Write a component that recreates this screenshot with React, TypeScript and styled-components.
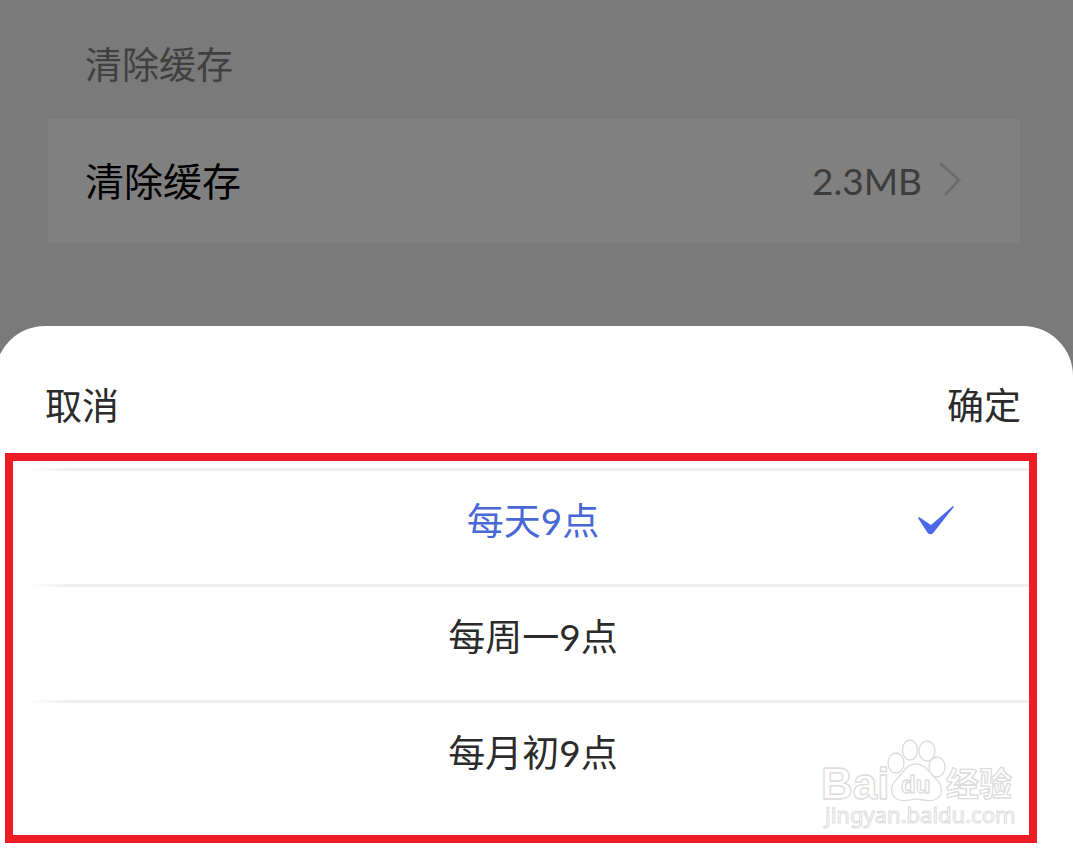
import React, { useState } from "react";
import styled, { createGlobalStyle } from "styled-components";

const GlobalStyle = createGlobalStyle`
  *, *::before, *::after { box-sizing: border-box; }
  html, body { margin: 0; }
  body {
    background: #7a7a7a;
    color: #2b2b2b;
    font-family: Lato, "Noto Sans CJK SC", sans-serif;
    overflow-x: hidden;
  }
  button {
    border: 0;
    padding: 0;
    background: none;
    color: inherit;
    font: inherit;
    cursor: pointer;
  }
`;

const Page = styled.main`
  display: flex;
  flex-direction: column;
  min-height: 100vh;
`;

const Settings = styled.section`
  padding: 39px 53px 83px 48px;
`;

const SectionTitle = styled.h2`
  margin: 0 0 28px;
  padding-left: 37px;
  color: #404040;
  font-size: 37px;
  font-weight: 400;
  line-height: 52px;
`;

const SettingRow = styled.button`
  && {
    display: flex;
    align-items: center;
    width: 100%;
    padding: 36px 58px 36px 37px;
    background: #808080;
    line-height: 52px;
  }
`;

const SettingName = styled.span`
  flex: 1;
  color: #000;
  font-size: 39px;
  text-align: left;
`;

const SettingValue = styled.span`
  margin-right: 18px;
  color: #3c3c3c;
  font-size: 37px;
`;

const Sheet = styled.section`
  flex: 1;
  margin-left: -5px;
  padding: 54px 36px 12px 10px;
  border-radius: 50px 50px 0 0;
  background: #fff;
  font-size: 37px;
  line-height: 52px;
`;

const SheetHeader = styled.header`
  display: flex;
  justify-content: space-between;
  margin-bottom: 21px;
  padding: 0 16px 0 40px;
`;

const SheetButton = styled.button`
  && { line-height: 52px; }
`;

const OptionFrame = styled.fieldset`
  position: relative;
  min-width: 0;
  margin: 0;
  padding: 7px 0 19px 24px;
  border: 8px solid #ee1c25;
`;

const Option = styled.label<{ $selected: boolean }>`
  display: grid;
  grid-template-columns: 1fr auto 1fr;
  align-items: center;
  height: 116px;
  margin-left: -8px;
  padding: 0 75px 10px 83px;
  background: linear-gradient(to right, #fff, #efefef 40px) top / 100% 3px no-repeat;
  color: ${(p) => (p.$selected ? "#4968d8" : "#2b2b2b")};
  cursor: pointer;
`;

const OptionInput = styled.input`
  appearance: none;
  width: 1px;
  height: 1px;
  margin: 0;
`;

const CheckIcon = styled.svg`
  justify-self: end;
`;

const Watermark = styled.svg`
  position: absolute;
  right: 8px;
  bottom: 1px;
  pointer-events: none;
`;

const choices = ["每天9点", "每周一9点", "每月初9点"];

function BaiduWatermark() {
  return (
    <Watermark width="204" height="98" viewBox="0 0 204 98" fill="#fff" stroke="#dcdcdc" strokeWidth="1.3" strokeLinejoin="round">
      <text x="4" y="63" fontSize="44" fontWeight="700" fontFamily='"Liberation Sans", sans-serif'>Bai</text>
      <text x="129" y="60" fontSize="33" fontWeight="700" fontFamily='"Noto Sans CJK SC", sans-serif'>经验</text>
      <ellipse cx="79" cy="27" rx="8" ry="10" />
      <ellipse cx="93" cy="14" rx="7.5" ry="10" />
      <ellipse cx="110" cy="15" rx="8" ry="10" />
      <ellipse cx="120" cy="31" rx="8" ry="10" />
      <path d="M99 28C89 28 87 36 80 43C72 50 73 61 82 64C89 66 94 63 99 63C104 63 110 66 117 64C126 61 127 50 119 43C112 37 109 28 99 28Z" />
      <text x="84" y="57" fontSize="24" fontWeight="700" fontFamily='"Liberation Sans", sans-serif'>du</text>
      <text x="8" y="87" fontSize="22" strokeWidth="1" fontFamily='"Noto Sans", sans-serif'>jingyan.baidu.com</text>
    </Watermark>
  );
}

export default function App() {
  const [selected, setSelected] = useState(0);
  return (
    <>
      <GlobalStyle />
      <Page>
        <Settings>
          <SectionTitle>清除缓存</SectionTitle>
          <SettingRow type="button">
            <SettingName>清除缓存</SettingName>
            <SettingValue>2.3MB</SettingValue>
            <svg width="22" height="40" viewBox="0 0 22 40" fill="none" stroke="#6c6c6c" strokeWidth="3">
              <path d="M0 2L19 19L5 34" />
            </svg>
          </SettingRow>
        </Settings>
        <Sheet>
          <SheetHeader>
            <SheetButton type="button">取消</SheetButton>
            <SheetButton type="button">确定</SheetButton>
          </SheetHeader>
          <OptionFrame>
            {choices.map((name, i) => (
              <Option key={name} $selected={i === selected}>
                <OptionInput
                  type="radio"
                  name="schedule"
                  checked={i === selected}
                  onChange={() => setSelected(i)}
                />
                <span>{name}</span>
                {i === selected && (
                  <CheckIcon width="36" height="30" viewBox="0 0 36 30" fill="#4b68e8">
                    <path d="M1 11L13 19L35 0L36 1C28 10 22 19 16 26C14 29 11 29 9 26L0 12Z" />
                  </CheckIcon>
                )}
              </Option>
            ))}
            <BaiduWatermark />
          </OptionFrame>
        </Sheet>
      </Page>
    </>
  );
}
